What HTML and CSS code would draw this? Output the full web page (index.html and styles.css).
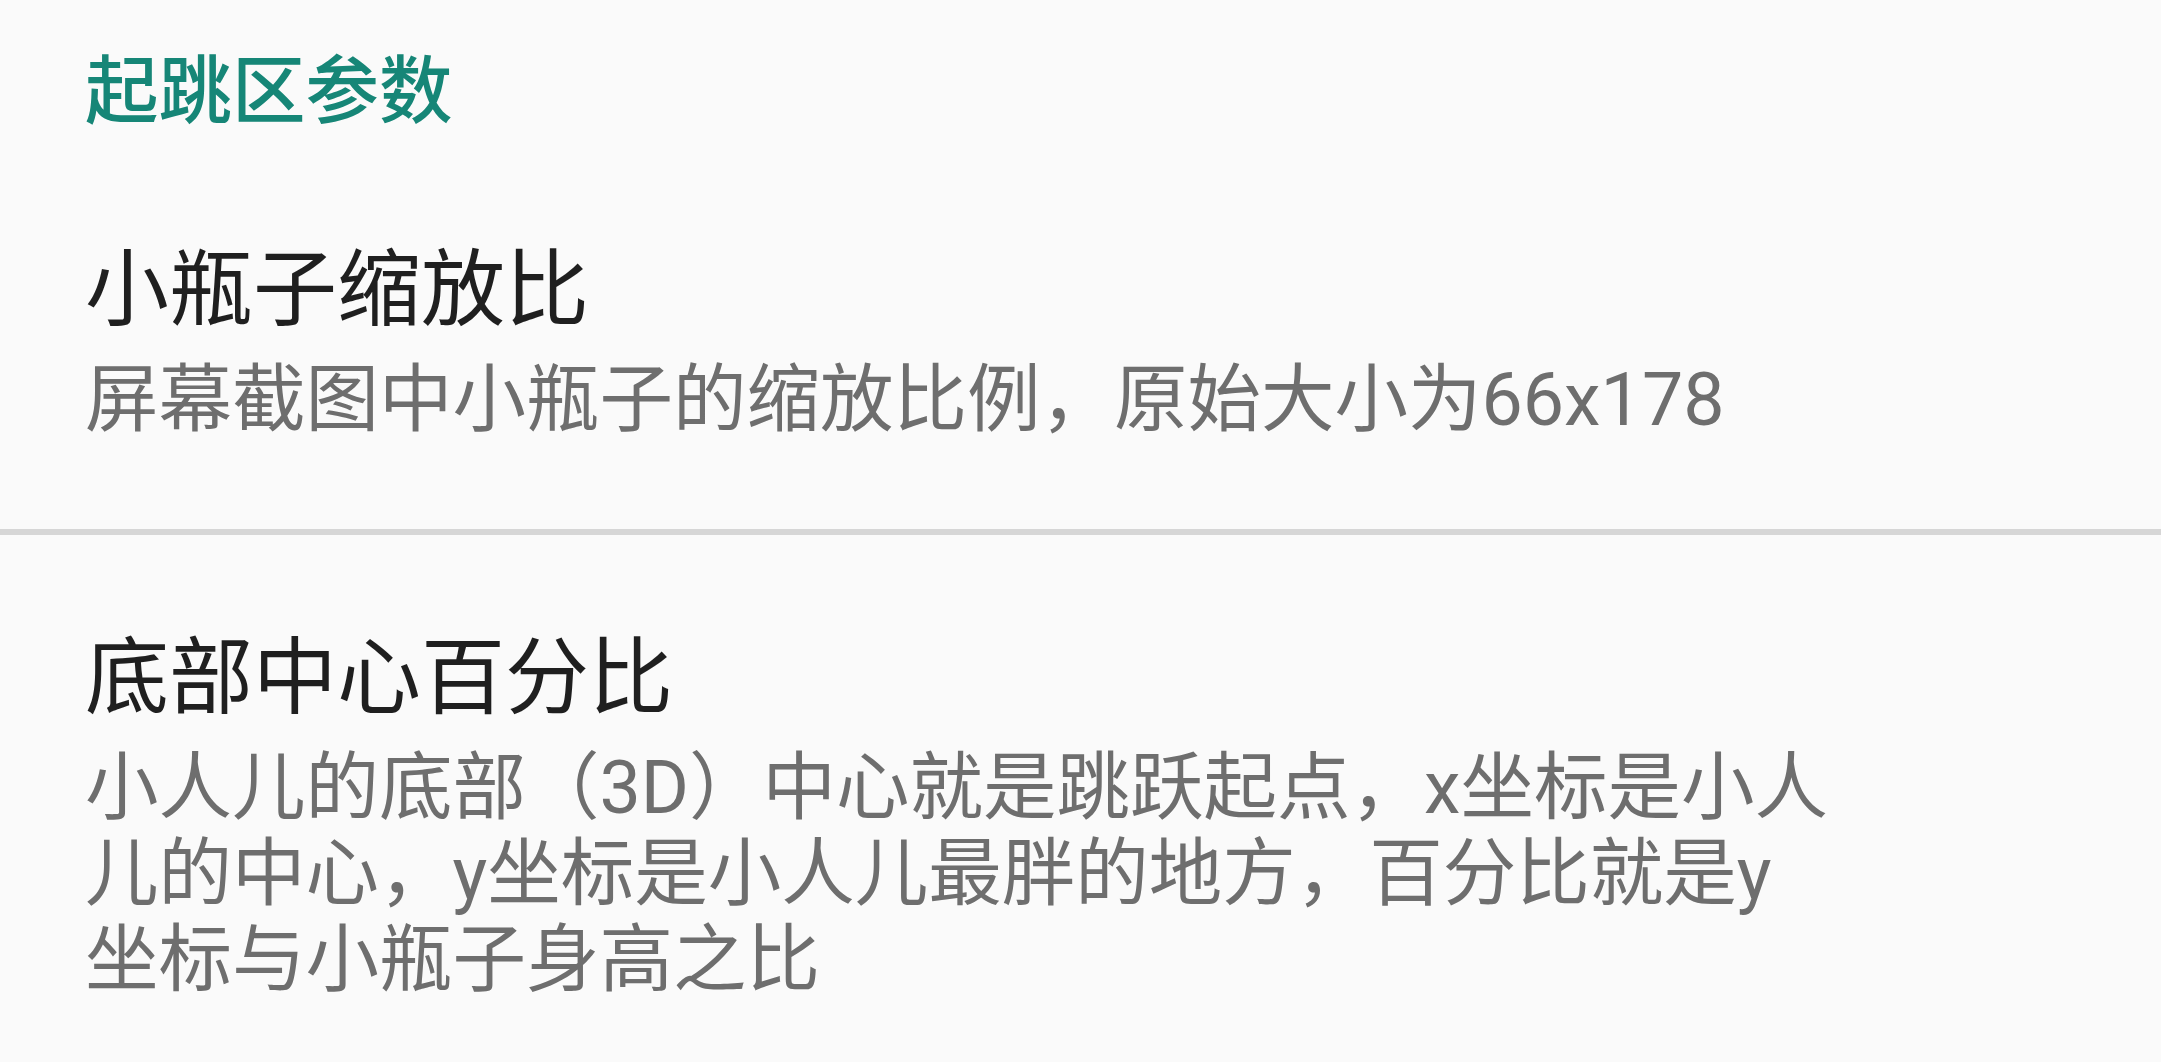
FILE: index.html
```html
<!DOCTYPE html>
<html lang="zh-CN">
<head>
<meta charset="utf-8">
<title>起跳区参数</title>
<link rel="stylesheet" href="styles.css">
</head>
<body>
<div class="screen">
  <div class="category">起跳区参数</div>
  <div class="pref">
    <div class="pref-title">小瓶子缩放比</div>
    <div class="pref-summary">屏幕截图中小瓶子的缩放比例，原始大小为66x178</div>
  </div>
  <div class="divider"></div>
  <div class="pref">
    <div class="pref-title">底部中心百分比</div>
    <div class="pref-summary">小人儿的底部（3D）中心就是跳跃起点，x坐标是小人儿的中心，y坐标是小人儿最胖的地方，百分比就是y坐标与小瓶子身高之比</div>
  </div>
</div>
</body>
</html>
```

FILE: styles.css
```css
html, body {
  margin: 0;
  padding: 0;
  background: #fafafa;
}
body {
  font-family: Roboto, "Noto Sans CJK SC", sans-serif;
  width: 2161px;
  height: 1062px;
  overflow: hidden;
}
.screen {
  display: flex;
  flex-direction: column;
}
.category {
  padding: 49px 85px 12px;
  font-size: 73.5px;
  line-height: 86px;
  font-weight: 500;
  color: #168677;
}
.pref {
  padding: 94px 85px 86px;
}
.pref-title {
  font-size: 84px;
  line-height: 100px;
  color: #1f1f1f;
}
.pref-summary {
  margin-top: 16px;
  font-size: 73.5px;
  line-height: 86px;
  color: #6e6e6e;
  max-width: 1750px;
}
.divider {
  height: 6px;
  background: #d6d6d6;
}
```
